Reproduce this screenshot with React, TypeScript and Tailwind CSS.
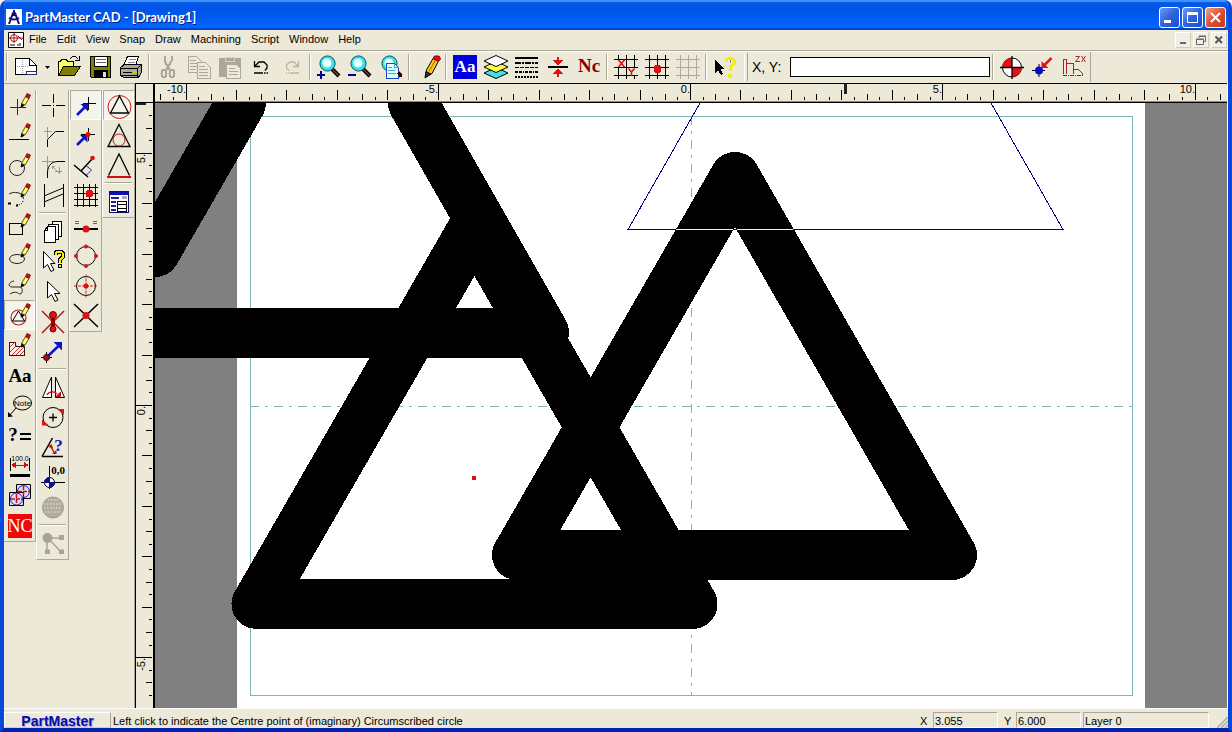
import type { ReactNode } from "react";

const menus = ["File", "Edit", "View", "Snap", "Draw", "Machining", "Script", "Window", "Help"];

const UNIT = 50.45;

// quarter unit steps
const topSteps = Array.from({ length: 86 }, (_, i) => (i - 42) / 4);
const sideSteps = Array.from({ length: 48 }, (_, i) => (i - 24) / 4);

function Icon({ children, smooth }: { children: ReactNode; smooth?: boolean }) {
  return (
    <svg
      width="24"
      height="24"
      viewBox="0 0 24 24"
      fill="none"
      stroke="#000"
      shapeRendering={smooth ? "auto" : "crispEdges"}
      className="shrink-0 overflow-visible"
      aria-hidden="true"
    >
      {children}
    </svg>
  );
}

// little yellow pencil used in the corner of the draw tools
function SmallPencil() {
  return (
    <g shapeRendering="auto">
      <path d="M14 10.5L13 14L16 12.5Z" fill="#000" stroke="#000" />
      <path d="M13.500 10.5L17.5 3.500L21 5.5L17 12Z" fill="#ffff55" stroke="#222" strokeWidth=".8" />
      <path d="M17.5 3.500L19 .5L22.500 2L21 5.5Z" fill="#c81010" stroke="#700" strokeWidth=".7" />
    </g>
  );
}

function Magnifier() {
  return (
    <g shapeRendering="auto">
      <path d="M15 14L22 21" stroke="#000" strokeWidth="4" />
      <path d="M15.5 14.5L21.5 20.5" stroke="#8b3a2a" strokeWidth="1.6" />
      <circle cx="10.5" cy="8.5" r="7.6" fill="#35e0e8" stroke="#0a5560" />
      <circle cx="10" cy="8" r="4.6" fill="#e8ffff" stroke="none" />
    </g>
  );
}

const gridPath = "M4.5 0V24M12.5 0V24M20.5 0V24M0 4.5H24M0 12.5H24M0 20.5H24";

const icons: Record<string, ReactNode> = {
  New: (
    <Icon>
      <path d="M1.5 3.5H15.5L22.5 10.5V19.5H1.5Z" fill="#fff" />
      <path d="M15.5 3.5V10.5H22.5" />
      <path d="M3 11.5H14M8.5 5V18" stroke="#999" strokeDasharray="1 1" />
      <path d="M12.5 16.5H22.5V19.5H12.5Z" fill="#fff" stroke="#203070" />
    </Icon>
  ),
  Open: (
    <Icon>
      <path d="M1.5 20.5V6.5H3.5L4.5 4.5H9.5L10.5 6.5H16.5V11" fill="#ffff66" />
      <path d="M1.5 20.5L6.5 11.5H23.5L17.5 20.5Z" fill="#808000" />
      <path d="M12.5 4.5L15.5 1.5H18.5L21.5 4.5M22.5 .5V5.5H17.5" />
    </Icon>
  ),
  Save: (
    <Icon>
      <path d="M2.5 1.5H22.5V22.5H3.5L2.5 21.5Z" fill="#808000" />
      <path d="M6.5 1.5H19.5V11.5H6.5Z" fill="#fff" />
      <path d="M8 4.5H18M8 7.5H18" stroke="#666" />
      <path d="M6.5 15.5H19.5V22.5H6.5Z" fill="#000" />
      <path d="M15 17H18V22H15Z" fill="#ddd" stroke="none" />
    </Icon>
  ),
  Print: (
    <Icon>
      <path d="M8.5 1.5H19.5L16.5 10.5H4.5Z" fill="#fff" />
      <path d="M10 4.5H17M9 7.5H16" stroke="#888" />
      <path d="M1.5 12.5L5.5 9.5H22.5V17.5L19.5 22.5H4.5L1.5 20.5Z" fill="#a8a8a0" />
      <path d="M1.5 13.5H18.5V22M18.5 13.5L22.5 9.5" />
      <path d="M4 17.5H17M2 20.5H18" />
      <path d="M13 16H17V17H13Z" fill="#ee0" stroke="#cc0" />
    </Icon>
  ),
  Cut: (
    <Icon>
      <path d="M8.5 1V6L14.5 16M15.5 1V6L9.5 16" stroke="#aca899" strokeWidth="2" />
      <ellipse cx="8" cy="18.5" rx="2.5" ry="3.5" stroke="#aca899" strokeWidth="2" />
      <ellipse cx="16" cy="18.5" rx="2.5" ry="3.5" stroke="#aca899" strokeWidth="2" />
    </Icon>
  ),
  Copy: (
    <Icon>
      <path d="M1.5 1.5H9.5L14.5 6.5V17.5H1.5Z" stroke="#aca899" />
      <path d="M3 5.5H9M3 8.5H12M3 11.5H12M3 14.5H9" stroke="#aca899" />
      <path d="M10.5 7.5H18.5L23.5 12.5V23.5H10.5Z" fill="#ece9d8" stroke="#aca899" />
      <path d="M12 11.5H18M12 14.5H21M12 17.5H21M12 20.5H21" stroke="#aca899" />
    </Icon>
  ),
  Paste: (
    <Icon>
      <path d="M1.5 3.5H22.5V21.5H1.5Z" fill="#aca899" stroke="#aca899" />
      <path d="M7 2H16V6H7Z" fill="#aca899" stroke="#d8d4c4" />
      <path d="M8.5 9.5H18.5L22.5 13.5V23.5H8.5Z" fill="#ece9d8" stroke="#aca899" />
      <path d="M11 13.5H17M11 16.5H20M11 19.5H20" stroke="#aca899" />
    </Icon>
  ),
  Undo: (
    <Icon smooth>
      <path d="M5.5 6V11.5H11M6 11L10 7H15L18 10V13L16 15.5" strokeWidth="1.3" />
      <path d="M5 18H14M15 18H16.5M17.5 18H19" strokeWidth="1.3" />
    </Icon>
  ),
  Redo: (
    <Icon smooth>
      <path d="M18.5 6V11.5H13M18 11L14 7H10L6.5 10V13L9 15.5" stroke="#b8b4a4" strokeWidth="1.3" />
      <path d="M10 18H19M8 18H9M6 18H7" stroke="#b8b4a4" strokeWidth="1.3" />
    </Icon>
  ),
  "Zoom in": (
    <Icon>
      <Magnifier />
      <path d="M0 20H8M4 16V24" stroke="#000090" strokeWidth="2" />
    </Icon>
  ),
  "Zoom out": (
    <Icon>
      <Magnifier />
      <path d="M0 20H8" stroke="#000090" strokeWidth="2" />
    </Icon>
  ),
  "Zoom window": (
    <Icon>
      <Magnifier />
      <path d="M7.5 8.5H15.5L19.5 12.5V23.5H7.5Z" fill="#dff" stroke="#1a4cc0" />
      <path d="M15.5 8.5V12.5H19.5M9 12.5H13M9 15.5H16M9 18.5H17" stroke="#4aa0d8" />
      <path d="M19 18L23 22" stroke="#400" strokeWidth="2" />
    </Icon>
  ),
  Pencil: (
    <Icon smooth>
      <path d="M10.5 15L17 3.5L22.5 6L16 18.5L9.5 22Z" fill="#ffc820" />
      <path d="M13 16.5L19.5 5" stroke="#a86800" />
      <path d="M10 16.5L9 23L15 19Z" fill="#333" />
      <path d="M17 3.5L18.5 1L23 1L24.5 4L22.5 6.5Z" fill="#dd1111" stroke="#800" />
    </Icon>
  ),
  "Text style": (
    <Icon>
      <path d="M0 0H24V24H0Z" fill="#0000dd" stroke="none" />
      <text x="12" y="17" textAnchor="middle" fill="#fff" stroke="none" fontFamily="Liberation Serif, serif" fontWeight="700" fontSize="17">
        Aa
      </text>
    </Icon>
  ),
  Layers: (
    <Icon smooth>
      <path d="M0 18L12 12.5L24 18L12 23.5Z" fill="#40e0e8" />
      <path d="M0 12L12 6.5L24 12L12 17.5Z" fill="#ffff40" />
      <path d="M0 6L12 .5L24 6L12 11.5Z" fill="#fff" />
    </Icon>
  ),
  "Line style": (
    <Icon>
      <path d="M0 3H23" strokeWidth="2" />
      <path d="M0 8H23" strokeWidth="2" strokeDasharray="6 1 2 1" />
      <path d="M0 12.5H23" strokeDasharray="4 1" />
      <path d="M0 17H23" strokeWidth="2" strokeDasharray="3 1 3 1 1 1" />
      <path d="M0 22H23" strokeWidth="2" strokeDasharray="2 1" />
    </Icon>
  ),
  "Line width": (
    <Icon>
      <path d="M2 12H22" strokeWidth="2" />
      <path d="M12 2V10M12 14V22" stroke="#e01010" strokeWidth="2" />
      <path d="M6.5 5H17.5L12 10.5ZM6.5 19H17.5L12 13.5Z" fill="#e01010" stroke="none" />
    </Icon>
  ),
  "NC settings": (
    <Icon>
      <text x="12" y="17" textAnchor="middle" fill="#8b0000" stroke="none" fontFamily="Liberation Serif, serif" fontWeight="700" fontSize="19">
        Nc
      </text>
    </Icon>
  ),
  "XY grid": (
    <Icon>
      <path d={gridPath} />
      <path d="M4 5H11V12H4ZM14 13H21V20H14Z" fill="#ece9d8" stroke="none" />
      <path d="M4.5 5L10.5 12M10.5 5L4.5 12M14.5 13.5L17.5 17L20.5 13.5M17.5 17V21" stroke="#d01010" strokeWidth="1.5" shapeRendering="auto" />
    </Icon>
  ),
  "Snap grid": (
    <Icon>
      <path d={gridPath} />
      <circle cx="12.5" cy="14" r="4" fill="#e01010" stroke="none" />
    </Icon>
  ),
  "Hide grid": (
    <Icon>
      <path d={gridPath} stroke="#aca899" />
    </Icon>
  ),
  "Context help": (
    <Icon>
      <path d="M2 5V18L5 15L8 20L10 19L7.5 14H11Z" fill="#000" stroke="none" />
      <path d="M13 7V5L15 3.5H19L21 5.5V9L17 12V16" stroke="#f4f000" strokeWidth="3" />
      <path d="M15.5 19H18.5V22H15.5Z" fill="#f4f000" stroke="#f4f000" />
      <path d="M17 5V8" stroke="#888" />
    </Icon>
  ),
  Origin: (
    <Icon smooth>
      <circle cx="12" cy="12.5" r="9.5" fill="#fff" />
      <path d="M12 12.5V3A9.5 9.5 0 0 0 2.5 12.5ZM12 12.5V22A9.5 9.5 0 0 0 21.5 12.5Z" fill="#e81010" stroke="none" />
      <path d="M12 1V24M0 12.5H24" strokeWidth="1.3" />
    </Icon>
  ),
  "Move origin": (
    <Icon smooth>
      <path d="M1 15.5H14M8 9V22" />
      <circle cx="8" cy="15.5" r="4" fill="#0808d0" stroke="none" />
      <path d="M20.5 3L13 10.5" stroke="#d81818" strokeWidth="2.5" />
      <path d="M10.5 13V6L17.5 13Z" fill="#d81818" stroke="none" />
    </Icon>
  ),
  "ZX plane": (
    <Icon>
      <path d="M1.5 19V4.5H4.5V19M4.5 8.5H11.5V19M11.5 14.5H16.5L20.5 18.5V20" stroke="#b02020" />
      <path d="M1 20.5H22" stroke="#802020" strokeDasharray="4 1 1 1" />
      <path d="M13.5 1.5H17.5L13.5 6.5H18M19.5 1L23.5 7M23.5 1L19.5 7" stroke="#b02020" shapeRendering="auto" />
    </Icon>
  ),

  // draw tools
  Point: (
    <Icon>
      <path d="M2 14.5H18M9.5 6V22" strokeWidth="1.5" stroke="#203020" />
      <SmallPencil />
    </Icon>
  ),
  Line: (
    <Icon>
      <path d="M1 16.5H21" strokeWidth="1.5" />
      <SmallPencil />
    </Icon>
  ),
  Circle: (
    <Icon smooth>
      <circle cx="9" cy="15" r="7.5" stroke="#222" />
      <SmallPencil />
    </Icon>
  ),
  Arc: (
    <Icon smooth>
      <path d="M1 11C6 8 15 9 15.5 16" stroke="#222" />
      <path d="M15 18C15 21 11 22 9 22" strokeDasharray="1 1.5" />
      <path d="M0 20.5H3M8 22.5H10" strokeWidth="2" />
      <SmallPencil />
    </Icon>
  ),
  Rectangle: (
    <Icon>
      <path d="M1.5 10.5H14.5V21.5H1.5Z" strokeWidth="1.5" />
      <SmallPencil />
    </Icon>
  ),
  Ellipse: (
    <Icon smooth>
      <ellipse cx="9" cy="16" rx="7.5" ry="4.5" stroke="#222" />
      <SmallPencil />
    </Icon>
  ),
  Spline: (
    <Icon smooth>
      <path d="M6 8C0 9 0 14 4 14H12C15 14.5 15 21 12 21C10 21 10 18.5 5 19.5L2 21" stroke="#222" />
      <SmallPencil />
    </Icon>
  ),
  Polygon: (
    <Icon smooth>
      <circle cx="10.5" cy="14.5" r="7.5" stroke="#c02020" strokeWidth="1.2" />
      <path d="M10.5 8L16.5 18H4.5Z" />
      <SmallPencil />
    </Icon>
  ),
  Hatch: (
    <Icon>
      <path d="M1.5 9.5H7.5V13.5H16.5V22.5H1.5Z" fill="#fdf0e8" stroke="#401010" />
      <path d="M2 14L6.5 9.5M2 19L8.5 12.5M4 22L12 14M8 22L16 14M12 22L16 18" stroke="#d03030" shapeRendering="auto" />
      <SmallPencil />
    </Icon>
  ),
  Text: (
    <Icon>
      <text x="12" y="19" textAnchor="middle" fill="#000" stroke="none" fontFamily="Liberation Serif, serif" fontWeight="700" fontSize="19">
        Aa
      </text>
    </Icon>
  ),
  Note: (
    <Icon smooth>
      <ellipse cx="14.5" cy="10" rx="9" ry="7" />
      <path d="M8 15L2 22" />
      <path d="M0 24V19L5 23.5Z" fill="#000" stroke="none" />
      <text x="14.5" y="13" textAnchor="middle" fill="#000" stroke="none" fontFamily="Liberation Sans, sans-serif" fontSize="8">
        Note
      </text>
    </Icon>
  ),
  Measure: (
    <Icon>
      <text x="5" y="18" textAnchor="middle" fill="#000" stroke="none" fontFamily="Liberation Serif, serif" fontWeight="700" fontSize="19">
        ?
      </text>
      <path d="M12 11H23M12 16H23" strokeWidth="2" />
    </Icon>
  ),
  Dimension: (
    <Icon>
      <text x="12" y="8" textAnchor="middle" fill="#000" stroke="none" fontFamily="Liberation Sans, sans-serif" fontSize="7">
        100.0
      </text>
      <path d="M2.5 5V18M21.5 5V18" />
      <path d="M4 12H20" stroke="#d01010" />
      <path d="M3 12L8 9V15ZM21 12L16 9V15Z" fill="#d01010" stroke="none" />
      <path d="M2 22.5H22" strokeWidth="3" />
    </Icon>
  ),
  "Copy shapes": (
    <Icon smooth>
      <path d="M8.5 1.5H22.5V15.5H8.5Z" fill="#dde" />
      <circle cx="15.5" cy="8.5" r="6" stroke="#2020c0" />
      <path d="M1.5 9.5H15.5V22.5H1.5Z" fill="#dde" />
      <circle cx="8.5" cy="16" r="6" stroke="#2020c0" />
      <path d="M15.5 3V14M10 8.5H21M8.5 11V21M3 16H14" stroke="#d01010" strokeWidth="1.5" strokeDasharray="4 1" />
    </Icon>
  ),
  NC: (
    <Icon>
      <path d="M0 1H24V25H0Z" fill="#f00808" stroke="none" />
      <text x="12" y="19" textAnchor="middle" fill="#fff" stroke="none" fontFamily="Liberation Serif, serif" fontSize="18">
        NC
      </text>
    </Icon>
  ),

  // edit tools
  Trim: (
    <Icon>
      <path d="M1 12.5H10M15 12.5H24M12.5 1V10M12.5 15V24M12 12.5H13" />
    </Icon>
  ),
  Chamfer: (
    <Icon>
      <path d="M3 8.5H11M6.5 4V15" stroke="#999" />
      <path d="M6.5 24V16.5L14.5 8.5H23" shapeRendering="auto" />
    </Icon>
  ),
  Fillet: (
    <Icon>
      <path d="M1 8.5H13M6.5 3V17M14 18H21M18 14V21M11 13V16M11 13H14" stroke="#999" />
      <path d="M11 13L18 20" stroke="#999" shapeRendering="auto" />
      <path d="M6.5 25V19C7 12 11 8.5 17 8.5H24" shapeRendering="auto" />
    </Icon>
  ),
  Offset: (
    <Icon>
      <path d="M3.5 1V24M22.5 1V24" strokeWidth="1.3" />
      <path d="M3 13L22 5M3 19L22 11" shapeRendering="auto" />
    </Icon>
  ),
  Duplicate: (
    <Icon>
      <path d="M11.5 2.5H20.5V17.5H11.5Z" fill="#fff" />
      <path d="M7.5 5.5H17.5V20.5H7.5Z" fill="#fff" />
      <path d="M3.5 11.5L6.5 7.5H14.5V23.5H3.5Z" fill="#fff" />
      <path d="M3.5 11.5H6.5V7.5" />
    </Icon>
  ),
  Query: (
    <Icon>
      <path d="M2.5 2.5V19L6.5 15.5L10 22.5L13 21L9.5 14.5H14Z" fill="#fff" shapeRendering="auto" />
      <path d="M14.5 6V4L16 2.5H20L22 4.5V8L18.5 11V14" stroke="#000" strokeWidth="4" />
      <path d="M14.5 6V4L16 2.5H20L22 4.5V8L18.5 11V14" stroke="#f4f000" strokeWidth="2" />
      <path d="M17 15.5H20V18.5H17Z" fill="#f4f000" />
    </Icon>
  ),
  Select: (
    <Icon smooth>
      <path d="M6.5 2.5V19L10.5 15.5L14 22.5L17 21L13.5 14.5H19Z" fill="#fff" />
    </Icon>
  ),
  Delete: (
    <Icon smooth>
      <path d="M1 2L23 24M23 2L1 24" stroke="#b01818" strokeWidth="1.5" />
      <path d="M12 6V20" stroke="#a00000" strokeWidth="4" />
      <circle cx="12" cy="6" r="3.5" fill="#e01010" stroke="#600" />
      <circle cx="12" cy="20" r="3" fill="#e01010" stroke="#600" />
    </Icon>
  ),
  Move: (
    <Icon smooth>
      <path d="M0 18.5H11M5.5 13V24" />
      <path d="M5.5 18.5L18 6.5" stroke="#1010d0" strokeWidth="2.5" />
      <path d="M12.500 3H21V11.5Z" fill="#1010d0" stroke="none" />
      <circle cx="5.5" cy="18.5" r="3" fill="#a01010" stroke="#400" />
    </Icon>
  ),
  Mirror: (
    <Icon smooth>
      <path d="M10.5 2V22.5H1.5ZM14.5 2V22.5H23.5Z" fill="#fff" />
      <path d="M6 20C8 16 14 16 16 19" stroke="#d01010" strokeWidth="1.3" />
      <path d="M15 21.5H19.5V17Z" fill="#d01010" stroke="#d01010" />
    </Icon>
  ),
  Rotate: (
    <Icon smooth>
      <circle cx="12" cy="12.5" r="10" />
      <path d="M12 8.5V16.5M8 12.5H16" strokeWidth="1.3" />
      <path d="M16 4H23V10ZM1 14.5V20.5H8Z" fill="#d81818" stroke="none" />
    </Icon>
  ),
  Angle: (
    <Icon smooth>
      <path d="M1 21.5H22M1 21.5L11.5 3" strokeWidth="1.5" />
      <path d="M9 10L14 19" stroke="#c01010" strokeWidth="1.5" />
      <path d="M7 12L10.5 9L12 13ZM11 19H15.5V15Z" fill="#c01010" stroke="none" />
      <text x="17.5" y="16" textAnchor="middle" fill="#1010c0" stroke="none" fontFamily="Liberation Serif, serif" fontWeight="700" fontSize="17">
        ?
      </text>
    </Icon>
  ),
  "Set origin": (
    <Icon smooth>
      <path d="M0 17.5H24M8.5 1V24" />
      <circle cx="8.5" cy="17.5" r="5" fill="#fff" />
      <path d="M8.5 17.5V12.5A5 5 0 0 0 3.5 17.5ZM8.5 17.5V22.5A5 5 0 0 0 13.5 17.5Z" fill="#101090" stroke="#101090" />
      <text x="17" y="9" textAnchor="middle" fill="#000" stroke="none" fontFamily="Liberation Serif, serif" fontWeight="700" fontSize="11">
        0,0
      </text>
    </Icon>
  ),
  Sphere: (
    <Icon smooth>
      <circle cx="12" cy="12.5" r="10.5" fill="#b0ac9e" stroke="#a09c8e" />
      <path d="M3 9H21M3 13H21M4 17H20M7 5H17" stroke="#ece9d8" strokeWidth="1.2" strokeDasharray="1.5 1.5" />
    </Icon>
  ),
  Nodes: (
    <Icon smooth>
      <path d="M6 7H20M7 7L20 21M6 7V21" stroke="#a8a496" strokeWidth="1.5" />
      <circle cx="6.5" cy="7" r="5" fill="#a8a496" stroke="none" />
      <path d="M18 4H23V9H18ZM18 18.5H23V23H18ZM4 18.5H9V23H4Z" fill="#a8a496" stroke="none" />
    </Icon>
  ),

  // snap tools
  "Snap free": (
    <Icon smooth>
      <path d="M9 10.5H22M14.5 4V17" />
      <path d="M3 22L11 14" stroke="#1010c8" strokeWidth="2.5" />
      <path d="M6.500 11H14V18.5Z" fill="#1010c8" stroke="none" />
    </Icon>
  ),
  "Snap end": (
    <Icon smooth>
      <path d="M7 11.5H21M14.5 5V18" />
      <path d="M3 22L11 14" stroke="#1010c8" strokeWidth="2.5" />
      <path d="M6 12H13.5V19.5Z" fill="#1010c8" stroke="none" />
      <circle cx="14" cy="11.5" r="2.5" fill="#e01010" stroke="none" />
    </Icon>
  ),
  "Snap perpendicular": (
    <Icon smooth>
      <path d="M0 12L14 24M7 18L19 5" strokeWidth="1.5" />
      <path d="M12 12.5L17.5 17L12.5 22" stroke="#2020c0" />
      <circle cx="18.5" cy="5" r="2.3" fill="#e01010" stroke="none" />
    </Icon>
  ),
  "Snap to grid": (
    <Icon>
      <path d="M3.5 1V24M9.5 1V24M15.5 1V24M21.5 1V24M0 4.5H24M0 10.5H24M0 16.5H24M0 22.5H24" />
      <circle cx="15.5" cy="10.5" r="4" fill="#e01010" stroke="none" />
    </Icon>
  ),
  "Snap middle": (
    <Icon smooth>
      <path d="M0 16H24" strokeWidth="2" />
      <path d="M1 8.5H5M1 10.5H5M19 8.5H23M19 10.5H23" stroke="#e03030" />
      <circle cx="12" cy="16" r="3.5" fill="#e01010" stroke="none" />
    </Icon>
  ),
  "Snap quadrant": (
    <Icon smooth>
      <circle cx="12" cy="13" r="9.5" />
      <g fill="#e01010" stroke="none">
        <circle cx="12" cy="3.5" r="2" />
        <circle cx="12" cy="23" r="2" />
        <circle cx="2" cy="13" r="2" />
        <circle cx="22" cy="13" r="2" />
      </g>
    </Icon>
  ),
  "Snap centre": (
    <Icon smooth>
      <circle cx="12" cy="13" r="9.5" />
      <path d="M12 1.5V24.5M0 13H24" stroke="#d02020" strokeDasharray="3 1" />
      <circle cx="12" cy="13" r="2.5" fill="#e01010" stroke="none" />
    </Icon>
  ),
  "Snap intersection": (
    <Icon smooth>
      <path d="M0 1L24 24M24 1L0 24" strokeWidth="1.5" />
      <circle cx="12" cy="12.5" r="3.5" fill="#e01010" stroke="none" />
    </Icon>
  ),

  // polygon modes
  Circumscribed: (
    <Icon smooth>
      <circle cx="12.5" cy="14" r="11.5" stroke="#c81818" />
      <path d="M12.5 3L21.5 20H3.5Z" strokeWidth="1.3" />
    </Icon>
  ),
  Inscribed: (
    <Icon smooth>
      <path d="M12 1.5L23 23.5H1Z" strokeWidth="1.3" />
      <circle cx="12" cy="17" r="6" stroke="#c81818" />
    </Icon>
  ),
  "By edge": (
    <Icon smooth>
      <path d="M1.5 22.5L12 1L22.5 22.5" strokeWidth="1.3" />
      <path d="M0 24H24" stroke="#d01010" strokeWidth="2" />
    </Icon>
  ),
  Properties: (
    <Icon>
      <path d="M2.5 2.5H21.5V23.5H2.5Z" fill="#fff" stroke="#101060" />
      <path d="M3 4.5H21" stroke="#1010b0" strokeWidth="3" />
      <path d="M4 9H12M4 13H9M4 17H9M4 21H9" stroke="#2020a0" strokeWidth="2" />
      <path d="M15 8.5H20" stroke="#aaa" strokeWidth="3" />
      <path d="M10.5 12.5H19.5V22.5H10.5ZM10.5 15.5H19.5M10.5 19.5H19.5" />
    </Icon>
  ),
};

// "|" is a separator
const mainTools = [
  "Open", "Save", "Print", "|",
  "Cut", "Copy", "Paste", "Undo", "Redo", "|",
  "Zoom in", "Zoom out", "Zoom window", "|",
  "Pencil", "|",
  "Text style", "Layers", "Line style", "Line width", "NC settings", "|",
  "XY grid", "Snap grid", "Hide grid", "|",
  "Context help",
];

const columns = [
  ["Point", "Line", "Circle", "Arc", "Rectangle", "Ellipse", "Spline", "Polygon", "Hatch", "Text", "Note", "Measure", "Dimension", "Copy shapes", "NC"],
  ["Trim", "Chamfer", "Fillet", "Offset", "|", "Duplicate", "Query", "Select", "Delete", "Move", "|", "Mirror", "Rotate", "Angle", "Set origin", "Sphere", "|", "Nodes"],
  ["Snap free", "Snap end", "Snap perpendicular", "Snap to grid", "Snap middle", "Snap quadrant", "Snap centre", "Snap intersection"],
  ["Circumscribed", "Inscribed", "By edge", "|", "Properties"],
];

const pressed = ["Polygon", "Snap free", "Circumscribed"];

function ToolButton({ name }: { name: string }) {
  return (
    <button aria-label={name} className="flex h-[30px] w-[31px] shrink-0 items-center justify-center">
      {icons[name]}
    </button>
  );
}

function VSep() {
  return (
    <div className="flex w-1.5 shrink-0 justify-center">
      <div className="h-[26px] w-0.5 border-r border-white bg-[#aca899]" />
    </div>
  );
}

function ToolColumn({ tools }: { tools: string[] }) {
  return (
    <div className="flex w-[33px] shrink-0 flex-col border-r border-b border-l border-r-[#aca899] border-b-[#aca899] border-l-white pb-px first:w-8 first:border-l-0">
      {tools.map((name, i) =>
        name === "|" ? (
          <div key={i} className="flex h-1.5 items-center px-0.5">
            <div className="h-0.5 w-full border-b border-white bg-[#aca899]" />
          </div>
        ) : (
          <button
            key={i}
            aria-label={name}
            aria-pressed={pressed.includes(name)}
            className={
              pressed.includes(name)
                ? "flex h-[30px] items-center justify-center border border-t-[#aca899] border-r-white border-b-white border-l-[#aca899] bg-[#f5f4ec]"
                : "flex h-[30px] items-center justify-center"
            }
          >
            {icons[name]}
          </button>
        )
      )}
    </div>
  );
}

function tickLength(u: number) {
  if (u % 5 === 0) return 16;
  if (u % 1 === 0) return 10;
  if (u % 0.5 === 0) return 6;
  return 3;
}

function TopRuler() {
  return (
    <svg className="block h-5 w-full border-y border-black bg-[#ece9d8]" shapeRendering="crispEdges">
      {topSteps.map((u) => {
        const x = Math.round(536 + u * UNIT);
        return (
          <g key={u}>
            <rect x={x - 1} y={16 - tickLength(u)} width="1" height={tickLength(u)} />
            {u % 5 === 0 && (
              <text x={x - 1} y="9" textAnchor="end" fontSize="11">
                {u}.
              </text>
            )}
          </g>
        );
      })}
      <rect x="689" y="0" width="3" height="10" fill="#222" />
      <rect x="0" y="17" width="100%" height="1" fill="#888" />
    </svg>
  );
}

function SideRuler() {
  return (
    <svg className="block h-full w-5 border-r-2 border-l border-black bg-[#ece9d8]" shapeRendering="crispEdges">
      {sideSteps.map((u) => {
        const y = Math.round(303 - u * UNIT);
        return (
          <g key={u}>
            <rect x={16 - tickLength(u)} y={y - 1} width={tickLength(u)} height="1" />
            {u % 5 === 0 && (
              <text transform={`translate(9 ${y}) rotate(-90)`} textAnchor="end" fontSize="11">
                {u}.
              </text>
            )}
          </g>
        );
      })}
      <rect x="0" y="0" width="10" height="2" fill="#222" />
    </svg>
  );
}

function Drawing() {
  return (
    <svg className="block h-full w-full bg-[#808080]" shapeRendering="crispEdges" role="img" aria-label="Drawing1">
      <g transform="translate(-155 -103)" fill="none">
        <rect x="237" y="60" width="908" height="700" fill="#fff" />
        <rect x="250.5" y="116.5" width="882" height="579" stroke="#7fb5b5" />
        <path d="M250 406.5H1132M691.5 116V695" stroke="#7fb5b5" strokeDasharray="9 6 3 6" />
        <g stroke="#000" strokeWidth="50" strokeLinejoin="round" strokeLinecap="round">
          <path d="M735 177L517 555H952Z" />
          <path d="M474.5 226L256.5 604H692.5Z" />
          <path d="M241 103L155 252M413 103L544 332.5H150" />
        </g>
        <path d="M700 103L628 229.5H1063L991 103" stroke="#000080" />
        <path d="M676 229.5H733M737 229.5H793" stroke="#ffff9c" />
        <rect x="472" y="476" width="4" height="4" fill="#e01010" />
      </g>
    </svg>
  );
}

const captionButton =
  "flex size-[21px] items-center justify-center rounded-[3px] border border-white bg-linear-to-br from-[#6f9bf5] via-[#2f62dc] to-[#1c4fd0]";
const childButton = "flex size-4 items-center justify-center border border-t-white border-r-[#d0cdbd] border-b-[#d0cdbd] border-l-white bg-[#f1efe4]";
const statusBox = "h-4 border border-t-[#aca899] border-r-white border-b-white border-l-[#aca899] pl-px leading-4";

export default function App() {
  return (
    <div className="h-screen bg-[#f0f0f0]">
      <div className="flex h-full flex-col overflow-hidden rounded-t-lg border-x-4 border-b-4 border-x-[#0a48dc] border-b-[#0020b0] bg-[#ece9d8] font-['Liberation_Sans',sans-serif] text-[11px] text-black">
        <header className="flex h-[30px] shrink-0 items-center justify-between bg-linear-to-b from-[#0a5be8] from-0% via-[#0054e6] via-30% to-[#0066ff] to-90% px-0.5 pt-1 shadow-[inset_0_2px_1px_#3d95ff,inset_0_-2px_1px_#0044cc]">
          <div className="flex items-center gap-[3px]">
            <svg width="16" height="16" viewBox="0 0 16 16" className="bg-white" aria-hidden="true">
              <path d="M8 1V4M7 4L3 15M9 4L13 15M3 9Q8 12 13 9" stroke="#101070" strokeWidth="2" fill="none" />
              <circle cx="8" cy="5" r="2.2" fill="#101070" />
            </svg>
            <h1 className="font-[Lato,sans-serif] text-[13px] leading-4 font-bold text-white [text-shadow:1px_1px_#0a1e84]">
              PartMaster CAD - [Drawing1]
            </h1>
          </div>
          <div className="flex gap-0.5">
            <button aria-label="Minimize" className={captionButton}>
              <svg width="13" height="13">
                <rect x="1" y="9" width="7" height="3" fill="#fff" />
              </svg>
            </button>
            <button aria-label="Maximize" className={captionButton}>
              <svg width="13" height="13" fill="none" stroke="#fff">
                <path d="M1.5 2V11.5H11.5V2" />
                <path d="M1 2.5H12" strokeWidth="3" />
              </svg>
            </button>
            <button
              aria-label="Close"
              className="flex size-[21px] items-center justify-center rounded-[3px] border border-white bg-linear-to-br from-[#f0a08c] via-[#dc5030] to-[#c03a18]"
            >
              <svg width="13" height="13" stroke="#fff" strokeWidth="2">
                <path d="M2 2L11 11M11 2L2 11" />
              </svg>
            </button>
          </div>
        </header>

        <nav className="flex h-5 shrink-0 items-center pr-px pl-1">
          <svg width="16" height="16" viewBox="0 0 16 16" fill="none" stroke="#000" aria-hidden="true">
            <path d="M.5 .5H15.5V15.5H.5Z" fill="#fff" />
            <circle cx="6" cy="6" r="3.5" stroke="#a01010" />
            <path d="M6 1V11M1 6H15M10 4L14 8" stroke="#a01010" />
            <path d="M2 13H7M9 13H11M12 11V14" />
          </svg>
          {menus.map((m) => (
            <button key={m} className="px-[5px] pb-0.5 leading-4">
              {m}
            </button>
          ))}
          <div className="ml-auto flex gap-0.5">
            <button aria-label="Minimize drawing" className={childButton}>
              <svg width="12" height="12">
                <rect x="3" y="8" width="6" height="2" fill="#666" />
              </svg>
            </button>
            <button aria-label="Restore drawing" className={childButton}>
              <svg width="12" height="12" fill="none" stroke="#666">
                <path d="M4 4V2.5H10.5V7.5H8.5M4 2H11" />
                <path d="M1.5 5.5H8.5V10.5H1.5ZM1 5H9" />
              </svg>
            </button>
            <button aria-label="Close drawing" className={childButton}>
              <svg width="12" height="12" stroke="#555" strokeWidth="2">
                <path d="M2.5 2.5L9 9M9 2.5L2.5 9" />
              </svg>
            </button>
          </div>
        </nav>

        <div className="flex h-[33px] shrink-0 items-center border-t border-[#aca899] pl-0.5 shadow-[inset_0_1px_#fff]">
          <div className="h-7 w-0.5 border-r border-white bg-[#aca899]" />
          <div className="w-0.5" />
          <ToolButton name="New" />
          <button aria-label="New from template" className="flex h-[30px] w-3 shrink-0 items-center justify-center">
            <svg width="5" height="3">
              <path d="M0 0H5L2.5 3Z" />
            </svg>
          </button>
          {mainTools.map((name, i) => (name === "|" ? <VSep key={i} /> : <ToolButton key={i} name={name} />))}
          <div className="ml-1 flex gap-0.5">
            <div className="h-7 w-px bg-white" />
            <div className="h-7 w-px bg-[#aca899]" />
          </div>
          <label htmlFor="xy" className="ml-1 w-[38px] shrink-0 text-sm">
            X, Y:
          </label>
          <input id="xy" className="h-5 w-[200px] shrink-0 border border-black bg-white px-1" />
          <VSep />
          <ToolButton name="Origin" />
          <ToolButton name="Move origin" />
          <ToolButton name="ZX plane" />
          <div className="ml-px h-[30px] w-px bg-[#aca899]" />
        </div>

        <main className="flex min-h-0 grow">
          <aside className="flex w-[131px] shrink-0 items-start border-t border-r border-[#aca899] pt-1.5">
            {columns.map((tools, i) => (
              <ToolColumn key={i} tools={tools} />
            ))}
          </aside>
          <div className="grid min-w-0 grow grid-cols-[20px_1fr] grid-rows-[20px_1fr]">
            <div className="border-y border-r-2 border-l border-black" />
            <TopRuler />
            <SideRuler />
            <Drawing />
          </div>
          <div className="w-px shrink-0 bg-white" />
        </main>

        <footer className="flex h-5 shrink-0 items-start border-t border-white pt-[3px] leading-4">
          <div className="mr-0.5 h-4 w-[107px] border border-t-white border-r-[#aca899] border-b-[#d0cdbd] border-l-white text-center text-sm leading-4 font-bold text-[#0a0aa8] [text-shadow:1px_1px_#a8a8d8]">
            PartMaster
          </div>
          <span className="grow truncate pt-px">Left click to indicate the Centre point of (imaginary) Circumscribed circle</span>
          <span className="w-[13px] pt-px">X</span>
          <div className={`${statusBox} mr-1.5 w-[65px]`}>3.055</div>
          <span className="w-3 pt-px">Y</span>
          <div className={`${statusBox} mr-0.5 w-[65px]`}>6.000</div>
          <div className={`${statusBox} mr-2 w-[126px]`}>Layer 0</div>
          <svg width="11" height="11" stroke="#aca899" strokeWidth="1.5" className="self-end" aria-hidden="true">
            <path d="M0 11L11 0M4 11L11 4M8 11L11 8" />
          </svg>
        </footer>
      </div>
    </div>
  );
}
